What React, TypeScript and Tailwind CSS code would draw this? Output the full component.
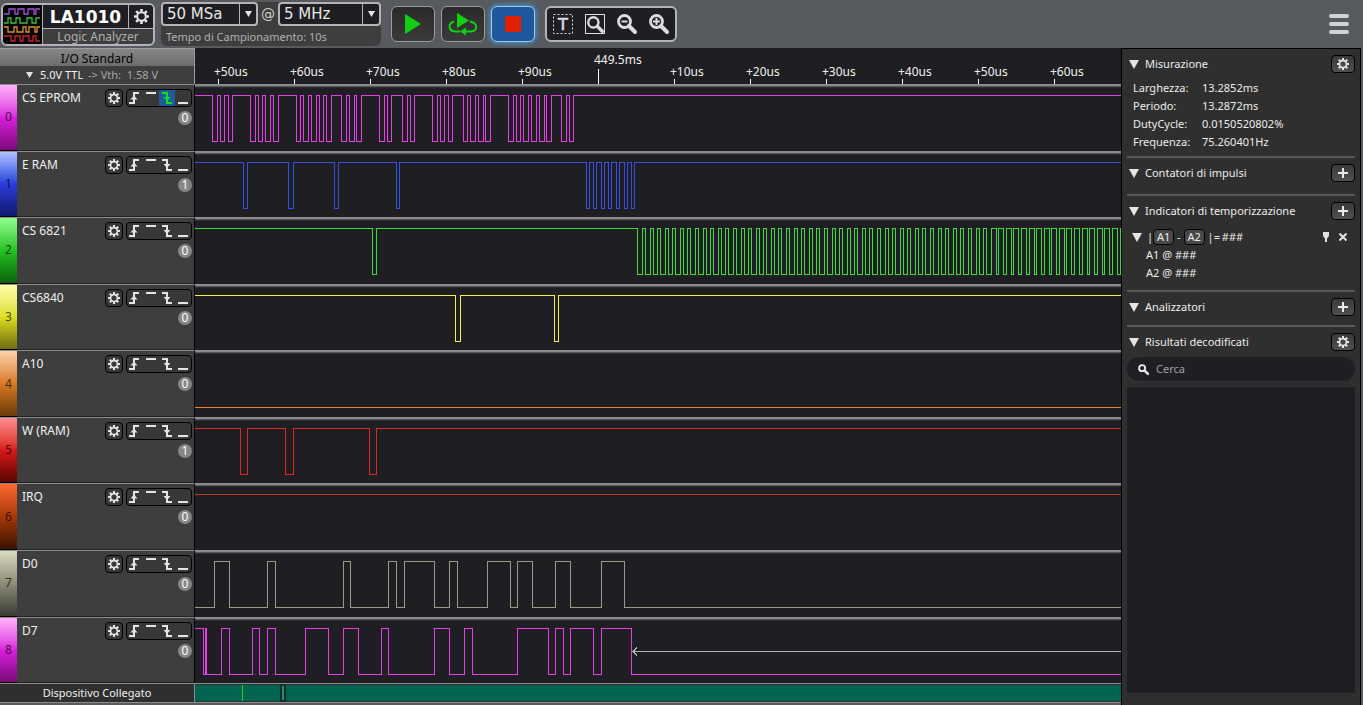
import { FC, ReactNode, useState } from "react";

type Channel = {
  name: string;
  strip: string;
  stroke: string;
  value: number;
  startHigh: boolean;
  edges: number[];
};

// clock-like burst that runs to the end of the CS 6821 trace
const burst: number[] = [];
for (let i = 0; i < 300; i++) {
  const start = Math.round(447 + i * 7.58);
  burst.push(start, start + (start > 790 ? 5 : 3));
}

const channels: Channel[] = [
  {
    name: "CS EPROM",
    strip: "from-[#ffb0fa] via-[#d820dc] to-[#7c0a7a]",
    stroke: "#e83ee8",
    value: 0,
    startHigh: true,
    edges: [
      17, 22, 25, 29, 33, 37, 55, 60, 63, 67, 70, 75, 78, 83, 101, 105, 108,
      113, 116, 121, 124, 128, 131, 136, 146, 151, 154, 159, 161, 166, 184, 189,
      192, 196, 207, 212, 215, 219, 237, 242, 245, 249, 253, 257, 268, 272, 275,
      280, 283, 288, 290, 295, 313, 318, 321, 325, 328, 333, 336, 341, 344, 349,
      351, 356, 366, 371, 374, 378,
    ],
  },
  {
    name: "E RAM",
    strip: "from-[#b4c0ff] via-[#2a3cdc] to-[#101a6e]",
    stroke: "#3450e0",
    value: 1,
    startHigh: true,
    edges: [
      48, 52, 93, 98, 139, 143, 201, 204, 391, 394, 398, 401, 406, 409, 413,
      416, 421, 424, 429, 432, 436, 439,
    ],
  },
  {
    name: "CS 6821",
    strip: "from-[#8cff8c] via-[#22c322] to-[#0c620c]",
    stroke: "#3cdc3c",
    value: 0,
    startHigh: true,
    edges: [177, 181, 442, ...burst],
  },
  {
    name: "CS6840",
    strip: "from-[#ffffa8] via-[#dede1e] to-[#6e6e10]",
    stroke: "#f4f03c",
    value: 0,
    startHigh: true,
    edges: [260, 265, 359, 363],
  },
  {
    name: "A10",
    strip: "from-[#fcd2a8] via-[#d87a22] to-[#6e3a0a]",
    stroke: "#e48a24",
    value: 0,
    startHigh: false,
    edges: [],
  },
  {
    name: "W (RAM)",
    strip: "from-[#ff8c8c] via-[#d81a1a] to-[#5e0404]",
    stroke: "#dc2a20",
    value: 1,
    startHigh: true,
    edges: [45, 52, 90, 98, 174, 181],
  },
  {
    name: "IRQ",
    strip: "from-[#ff6a30] via-[#a83808] to-[#3c1202]",
    stroke: "#b83c20",
    value: 0,
    startHigh: true,
    edges: [],
  },
  {
    name: "D0",
    strip: "from-[#dcdcc4] via-[#8c8c78] to-[#3c3c34]",
    stroke: "#9c9a86",
    value: 0,
    startHigh: false,
    edges: [
      19, 34, 72, 80, 148, 155, 193, 201, 209, 239, 254, 262, 292, 315, 322,
      337, 360, 375, 406, 429,
    ],
  },
  {
    name: "D7",
    strip: "from-[#ffb0fa] via-[#d820dc] to-[#7c0a7a]",
    stroke: "#e83ee8",
    value: 0,
    startHigh: true,
    edges: [
      8, 10, 11, 26, 34, 57, 64, 72, 80, 110, 133, 148, 163, 186, 193, 239, 254,
      269, 277, 322, 353, 360, 368, 375, 398, 406, 436,
    ],
  },
];

const ticks = [
  "+50us",
  "+60us",
  "+70us",
  "+80us",
  "+90us",
  "449.5ms",
  "+10us",
  "+20us",
  "+30us",
  "+40us",
  "+50us",
  "+60us",
];

const measures = [
  { label: "Larghezza:", value: "13.2852ms" },
  { label: "Periodo:", value: "13.2872ms" },
  { label: "DutyCycle:", value: "0.0150520802%" },
  { label: "Frequenza:", value: "75.260401Hz" },
];

const triggers = [
  {
    id: "rising",
    title: "Fronte di salita",
    line: "M2 13H7V3H12",
    arrow: "M3.5 9.5L7 5.5L10.5 9.5Z",
  },
  { id: "high", title: "Livello alto", line: "M3 3H13", arrow: "" },
  {
    id: "falling",
    title: "Fronte di discesa",
    line: "M3 3H8V13H13",
    arrow: "M4.5 7L8 11L11.5 7Z",
  },
  { id: "low", title: "Livello basso", line: "M3 13H13", arrow: "" },
];

const HIGH = 11;
const LOW = 57;

const tracePath = (startHigh: boolean, edges: number[]) => {
  let high = startHigh;
  let d = `M0 ${(high ? HIGH : LOW) + 0.5}`;
  edges.forEach((x) => {
    high = !high;
    d += `H${x + 0.5}V${(high ? HIGH : LOW) + 0.5}`;
  });
  return d + "H4000";
};

const Gear: FC<{ size: number }> = ({ size }) => (
  <svg width={size} height={size} viewBox="0 0 16 16" fill="none" stroke="#e4e4e4">
    <circle cx="8" cy="8" r="4.6" strokeWidth="2.2" />
    {[0, 45, 90, 135, 180, 225, 270, 315].map((a) => (
      <path key={a} d="M8 0V3" strokeWidth="2.8" transform={`rotate(${a} 8 8)`} />
    ))}
  </svg>
);

const Plus: FC = () => (
  <svg width="10" height="10" viewBox="0 0 10 10" stroke="#e8e8e8" strokeWidth="2">
    <path d="M5 0V10M0 5H10" />
  </svg>
);

const Triangle: FC<{ className?: string }> = ({ className }) => (
  <svg
    className={className ?? "h-[9px] w-[10px]"}
    viewBox="0 0 10 8"
    preserveAspectRatio="none"
    fill="#e4e4e4"
  >
    <path d="M0 0H10L5 8Z" />
  </svg>
);

const Magnifier: FC<{ inner?: string; boxed?: boolean }> = ({ inner, boxed }) => (
  <svg width="20" height="20" viewBox="0 0 20 20" fill="none" stroke="#dcdce0">
    {boxed && <rect x="0.5" y="0.5" width="19" height="19" />}
    <g transform={boxed ? "translate(2 2) scale(0.85)" : undefined}>
      <circle cx="7.5" cy="7.5" r="6" strokeWidth="2.8" />
      <path d="M12 12L18 18" strokeWidth="4" strokeLinecap="round" />
      {inner && <path d={inner} strokeWidth="2" />}
    </g>
  </svg>
);

const Logo: FC = () => (
  <svg width="39" height="39" viewBox="0 0 39 39" fill="none" strokeWidth="1.3">
    <rect width="39" height="39" fill="#050505" />
    <path stroke="#a050d8" d="M1 9H6V4H12V9H15V4H21V9H25V4H31V9H33V4H37" />
    <path stroke="#3cc040" d="M1 18H5V13H8V18H13V13H17V18H24V13H29V18H33V13H37" />
    <path stroke="#e09030" d="M1 22H5V27H11V22H14V27H20V22H23V27H26V22H32V27H34V22H37" />
    <path stroke="#c8202c" d="M1 31H8V36H12V31H17V36H20V31H26V36H30V31H33V36H37" />
  </svg>
);

const RateSelect: FC<{ label: string; options: string[]; width: string }> = ({
  label,
  options,
  width,
}) => (
  <div
    className={`${width} flex h-6 rounded border-2 border-[#b4b4b8] bg-[#1f1f23]`}
  >
    <select
      aria-label={label}
      className="min-w-0 flex-1 appearance-none bg-transparent pl-1 font-['DejaVu_Sans',sans-serif] text-[15px] leading-5 text-[#e6e6e6] focus:outline-none"
    >
      {options.map((o) => (
        <option key={o}>{o}</option>
      ))}
    </select>
    <div className="flex w-[17px] items-center justify-center border-l border-[#b4b4b8]">
      <Triangle className="h-[6px] w-[7px]" />
    </div>
  </div>
);

const Header: FC = () => {
  const [running, setRunning] = useState<string>("stop");
  const btn =
    "flex h-9 w-11 items-center justify-center rounded-md border focus:outline-none";
  const idle = "border-[#9a9c9e] bg-linear-to-b from-[#2a2a2a] to-[#3a3a3a]";
  const active =
    "border-[#a8c8e8] bg-[#1f579c] shadow-[0_0_5px_1px_#3a9ad8]";

  return (
    <header className="flex h-12 shrink-0 items-center bg-[#575a5e] pl-px pr-[14px]">
      <div className="flex overflow-hidden rounded-md border-2 border-[#b4b4b8] bg-[#3e3e3e]">
        <Logo />
        <div className="w-[111px] border-l border-[#b4b4b8]">
          <div className="flex h-6 border-b border-[#b4b4b8] bg-[#1f1f23]">
            <h1 className="flex-1 text-center font-['DejaVu_Sans',sans-serif] text-[17px] leading-[25px] font-bold text-white">
              LA1010
            </h1>
            <button
              aria-label="Impostazioni dispositivo"
              className="flex w-[25px] items-center justify-center border-l border-[#b4b4b8]"
            >
              <Gear size={15} />
            </button>
          </div>
          <div className="h-[15px] text-center leading-[15px] text-[#b0b0b0]">
            Logic Analyzer
          </div>
        </div>
      </div>

      <div className="ml-[6px] h-11 w-[220px] rounded-md bg-[#3e3e3e]">
        <div className="flex items-center justify-between">
          <RateSelect
            label="Campioni"
            options={["50 MSa", "100 MSa"]}
            width="w-[97px]"
          />
          <span className="font-['DejaVu_Sans',sans-serif] text-sm leading-5 text-[#d0d0d0]">
            @
          </span>
          <RateSelect
            label="Frequenza"
            options={["5 MHz", "10 MHz"]}
            width="w-[103px]"
          />
        </div>
        <div className="pl-[5px] text-[11px] leading-[22px] text-[#b0b0b0]">
          Tempo di Campionamento: 10s
        </div>
      </div>

      <div className="ml-[10px] flex gap-[6px]">
        <button
          aria-label="Avvia"
          className={`${btn} ${running === "play" ? active : idle}`}
          onClick={() => setRunning("play")}
        >
          <svg width="18" height="20" viewBox="0 0 18 20" fill="#10d010">
            <path d="M1 0L17 10L1 20Z" />
          </svg>
        </button>
        <button
          aria-label="Ripeti"
          className={`${btn} ${running === "loop" ? active : idle}`}
          onClick={() => setRunning("loop")}
        >
          <svg width="30" height="24" viewBox="0 0 30 24" fill="none">
            <path d="M9 1L21 8.5L9 16Z" fill="#10d010" />
            <path
              d="M6 9.5C0 11 0 19 7 19.5H12M22 9.5C30 11 30 19 23 19.5H15"
              stroke="#10d010"
              strokeWidth="2"
            />
            <path d="M18 15.5V23.5L12 19.5Z" fill="#10d010" />
          </svg>
        </button>
        <button
          aria-label="Ferma"
          className={`${btn} ${running === "stop" ? active : idle}`}
          onClick={() => setRunning("stop")}
        >
          <span className="h-4 w-4 bg-[#e02000]" />
        </button>
      </div>

      <div className="ml-[10px] flex h-9 items-center gap-3 rounded-md border-2 border-[#b4b4b8] bg-[#1f1f23] px-[6px]">
        <button aria-label="Seleziona intervallo">
          <svg width="20" height="20" viewBox="0 0 20 20">
            <rect
              x="0.5"
              y="0.5"
              width="19"
              height="19"
              fill="none"
              stroke="#dcdce0"
              strokeDasharray="2 2"
            />
            <text
              x="10"
              y="16"
              textAnchor="middle"
              fill="#dcdce0"
              stroke="#dcdce0"
              strokeWidth="0.6"
              fontSize="16"
              fontFamily="DejaVu Sans, sans-serif"
            >
              T
            </text>
          </svg>
        </button>
        <button aria-label="Adatta">
          <Magnifier boxed />
        </button>
        <button aria-label="Riduci">
          <Magnifier inner="M4.5 7.5H10.5" />
        </button>
        <button aria-label="Ingrandisci">
          <Magnifier inner="M4 7.5H11M7.5 4V11" />
        </button>
      </div>

      <button aria-label="Menu" className="ml-auto flex w-5 flex-col gap-1">
        <span className="h-1 rounded-sm bg-[#d0d2d4]" />
        <span className="h-1 rounded-sm bg-[#d0d2d4]" />
        <span className="h-1 rounded-sm bg-[#d0d2d4]" />
      </button>
    </header>
  );
};

const ChannelRow: FC<{ channel: Channel; index: number }> = ({
  channel,
  index,
}) => {
  const [trigger, setTrigger] = useState<string | null>(
    index === 0 ? "falling" : null
  );

  return (
    <div className="flex min-h-[52px] flex-1">
      <div className="flex w-[195px] shrink-0 border-t border-r border-t-[#8c8c8c] border-r-black bg-[#3e3e3e]">
        <div
          className={`flex w-[17px] items-center justify-center border-b border-black bg-linear-to-b text-black/70 ${channel.strip}`}
        >
          {index}
        </div>
        <div className="flex-1 border-b border-[#222] pt-1 pr-[2px] pl-[5px]">
          <div className="flex h-[18px] items-center">
            <span className="flex-1 text-[#f0f0f0]">{channel.name}</span>
            <button
              aria-label={`Impostazioni ${channel.name}`}
              className="mr-[3px] flex h-[18px] w-[18px] items-center justify-center rounded border border-black bg-[#383838]"
            >
              <Gear size={12} />
            </button>
            <div className="flex h-[18px] rounded border border-black bg-[#383838]">
              {triggers.map((t) => (
                <button
                  key={t.id}
                  aria-label={t.title}
                  className={`h-4 w-4 ${
                    trigger === t.id
                      ? "bg-[#1f5a9a] text-[#10e020]"
                      : "text-[#e4e4e4]"
                  }`}
                  onClick={() => setTrigger(trigger === t.id ? null : t.id)}
                >
                  <svg width="16" height="16" viewBox="0 0 16 16">
                    <path
                      d={t.line}
                      fill="none"
                      stroke="currentColor"
                      strokeWidth="2"
                    />
                    {t.arrow && <path d={t.arrow} fill="currentColor" />}
                  </svg>
                </button>
              ))}
            </div>
          </div>
          <div className="mt-1 flex justify-end">
            <span className="h-[14px] w-[14px] rounded-full bg-[#868686] text-center leading-[14px] text-white">
              {channel.value}
            </span>
          </div>
        </div>
      </div>

      <div className="relative min-w-0 flex-1 bg-[#1f1f23]">
        <div className="h-1 border-t-2 border-b border-t-[#8c8a90] border-b-[#2c2c30] bg-[#56555a]" />
        <svg
          className="absolute inset-0 h-full w-full"
          fill="none"
          shapeRendering="crispEdges"
        >
          <path
            d={tracePath(channel.startHigh, channel.edges)}
            stroke={channel.stroke}
          />
          {channel.name === "D7" && (
            <path d="M438 34.5H4000M442 30.5L438 34.5L442 38.5" stroke="#b0b0b0" />
          )}
        </svg>
      </div>
    </div>
  );
};

const SectionHead: FC<{ title: string; icon: "gear" | "plus" }> = ({
  title,
  icon,
}) => (
  <div className="flex h-[18px] items-center pl-[2px]">
    <Triangle />
    <h2 className="ml-[6px] flex-1">{title}</h2>
    <button
      aria-label={icon === "gear" ? `Impostazioni ${title}` : `Aggiungi ${title}`}
      className="flex h-[18px] w-6 items-center justify-center rounded border border-black bg-linear-to-b from-[#3a3a3a] to-[#505050]"
    >
      {icon === "gear" ? <Gear size={12} /> : <Plus />}
    </button>
  </div>
);

const Section: FC<{
  title: string;
  icon: "gear" | "plus";
  pad?: string;
  children?: ReactNode;
}> = ({ title, icon, pad, children }) => (
  <section className={`border-b-2 border-[#585858] pt-[6px] ${pad ?? ""}`}>
    <SectionHead title={title} icon={icon} />
    {children}
  </section>
);

const SidePanel: FC = () => (
  <aside className="flex w-[240px] shrink-0 flex-col border border-b-0 border-black bg-[#2f2f2f] px-[5px] pb-3 text-[11px] leading-[18px] text-[#ececec]">
    <Section title="Misurazione" icon="gear" pad="pb-[5px]">
      <dl className="mt-[6px] grid grid-cols-[69px_1fr] pl-[6px]">
        {measures.map((m) => (
          <div key={m.label} className="contents">
            <dt>{m.label}</dt>
            <dd>{m.value}</dd>
          </div>
        ))}
      </dl>
    </Section>
    <Section title="Contatori di impulsi" icon="plus" pad="pb-3" />
    <Section title="Indicatori di temporizzazione" icon="plus" pad="pb-2">
      <div className="mt-2 flex h-[18px] items-center pl-[5px]">
        <Triangle />
        <span className="ml-[5px]">|</span>
        <button className="mr-[3px] h-4 w-[21px] rounded border border-black bg-[#484848] leading-[14px]">
          A1
        </button>
        <span>-</span>
        <button className="mx-[3px] h-4 w-[21px] rounded border border-black bg-[#484848] leading-[14px]">
          A2
        </button>
        <span>|=&thinsp;###</span>
        <button aria-label="Fissa" className="ml-auto">
          <svg width="8" height="10" viewBox="0 0 8 10" fill="#e4e4e4">
            <path d="M1 0H7V4L5 6.5V10H3V6.5L1 4Z" />
          </svg>
        </button>
        <button aria-label="Rimuovi" className="mr-2 ml-[9px]">
          <svg width="8" height="8" viewBox="0 0 8 8" stroke="#e4e4e4" strokeWidth="2">
            <path d="M0.5 0.5L7.5 7.5M7.5 0.5L0.5 7.5" />
          </svg>
        </button>
      </div>
      <div className="pl-[19px]">A1 @ ###</div>
      <div className="pl-[19px]">A2 @ ###</div>
    </Section>
    <Section title="Analizzatori" icon="plus" pad="pb-[9px]" />
    <div className="pt-[6px]">
      <SectionHead title="Risultati decodificati" icon="gear" />
    </div>
    <label className="mt-[6px] flex h-6 items-center rounded-full bg-[#1f1f23] pl-[11px]">
      <svg width="11" height="11" viewBox="0 0 20 20" fill="none" stroke="#e8e8e8">
        <circle cx="7.5" cy="7.5" r="5.5" strokeWidth="3.4" />
        <path d="M12 12L18 18" strokeWidth="4.6" strokeLinecap="round" />
      </svg>
      <input
        type="text"
        aria-label="Cerca"
        placeholder="Cerca"
        className="ml-[7px] min-w-0 flex-1 bg-transparent placeholder:text-[#a0a0a0] focus:outline-none"
      />
    </label>
    <div className="mt-[6px] flex-1 bg-[#1f1f23]" />
  </aside>
);

export default function App() {
  return (
    <div className="flex h-screen flex-col overflow-hidden bg-[#575a5e] font-['Noto_Sans',sans-serif] text-xs">
      <Header />
      <div className="flex min-h-0 flex-1 pr-[2px]">
        <main className="flex min-w-0 flex-1 flex-col pb-[2px]">
          <div className="flex h-9 shrink-0">
            <div className="w-[195px] shrink-0 border-r border-[#a0a0a0] bg-[#3e3e3e]">
              <div className="h-[18px] border-t border-[#a0a0a0] bg-linear-to-b from-[#868686] to-[#6c6c6c] text-center leading-[20px] text-black">
                I/O Standard
              </div>
              <div className="flex h-[18px] items-center pl-[26px] text-[11px] text-[#a8a8a8]">
                <Triangle className="h-[6px] w-[7px]" />
                <select
                  aria-label="I/O Standard"
                  className="ml-[7px] w-[48px] appearance-none bg-transparent text-[#f0f0f0] focus:outline-none"
                >
                  <option>5.0V TTL</option>
                </select>
                <span className="whitespace-pre">{"-> Vth:  1.58 V"}</span>
              </div>
            </div>
            <div className="flex min-w-0 flex-1 items-end overflow-hidden bg-[#1f1f23] pl-[19px] text-[#f0f0f0]">
              {ticks.map((t, i) => (
                <div key={i} className="w-[76px] shrink-0">
                  <div
                    className={
                      t.endsWith("ms") ? "leading-[18px]" : "leading-[15px]"
                    }
                  >
                    {t}
                  </div>
                  <div
                    className={`ml-1 w-px bg-white ${
                      t.endsWith("ms") ? "h-[15px]" : "h-[5px]"
                    }`}
                  />
                </div>
              ))}
            </div>
          </div>

          <div className="flex min-h-0 flex-1 flex-col">
            {channels.map((c, i) => (
              <ChannelRow key={c.name} channel={c} index={i} />
            ))}
          </div>

          <footer className="flex h-5 shrink-0 border-y border-[#8c8c8c]">
            <div className="w-[195px] shrink-0 border-r border-[#8c8c8c] bg-[#2f2f2f] text-center text-[11px] leading-[18px] text-[#f0f0f0]">
              Dispositivo Collegato
            </div>
            <div className="relative flex-1 border-y border-[#303030] bg-[#006450]">
              <span className="absolute inset-y-0 left-[47px] w-px bg-[#20d020]" />
              <span className="absolute -inset-y-px left-[85px] w-[6px] border-2 border-[#12302a] bg-[#3c8070]" />
            </div>
          </footer>
        </main>
        <SidePanel />
      </div>
    </div>
  );
}
